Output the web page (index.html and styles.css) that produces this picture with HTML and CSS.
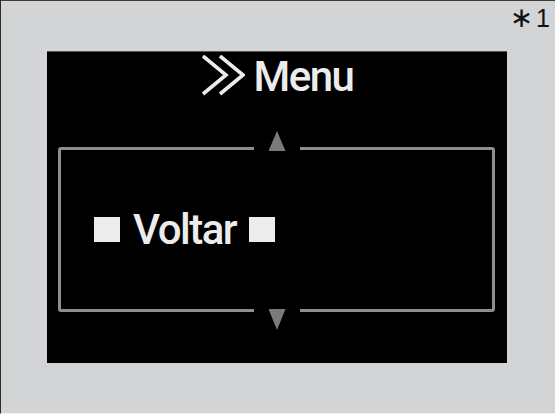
FILE: index.html
```html
<!DOCTYPE html>
<html>
<head>
<meta charset="utf-8">
<link rel="stylesheet" href="styles.css">
</head>
<body>
<div class="page">
  <div class="header"><span class="note"><span class="ast">∗</span><span class="num">1</span></span></div>
  <div class="panel">
    <div class="title">
      <svg class="chev" width="44" height="41" viewBox="0 0 44 41">
        <polyline points="2,1 25,20 2,39" fill="none" stroke="#ececec" stroke-width="3.6"/>
        <polyline points="19,1 42,20 19,39" fill="none" stroke="#ececec" stroke-width="3.6"/>
      </svg>
      <span class="title-text">Menu</span>
    </div>
    <div class="frame">
      <div class="notch notch-top"><span class="tri tri-up"></span></div>
      <div class="item">
        <span class="sq"></span>
        <span class="item-text">Voltar</span>
        <span class="sq"></span>
      </div>
      <div class="notch notch-bottom"><span class="tri tri-down"></span></div>
    </div>
  </div>
</div>
</body>
</html>
```
FILE: styles.css
```css
html, body {
  margin: 0;
  padding: 0;
  background: #d3d4d6;
}
.page {
  width: 555px;
  height: 414px;
  box-sizing: border-box;
  background: #d3d4d6;
  border-left: 1px solid #2a2a2a;
  border-top: 1px solid #3a3a3a;
  border-bottom: 1px solid #f2f2f2;
}
.header {
  height: 50px;
  display: flex;
  justify-content: flex-end;
  align-items: flex-start;
  padding-right: 5px;
  box-sizing: border-box;
}
.note {
  display: block;
  height: 30px;
  line-height: 30px;
  margin-top: 2px;
  font-family: "Liberation Sans", sans-serif;
  font-size: 25px;
  color: #111;
  white-space: nowrap;
}
.ast {
  font-family: "DejaVu Sans", sans-serif;
  font-size: 28px;
  margin-right: 3px;
}
.num {
  font-size: 25px;
}
.panel {
  margin-left: 46px;
  width: 460px;
  height: 312px;
  background: #000;
  border-top: 1px solid #555;
  box-sizing: border-box;
  display: flex;
  flex-direction: column;
}
.title {
  height: 95px;
  display: flex;
  justify-content: center;
  align-items: flex-start;
  gap: 9px;
  padding-top: 2px;
  box-sizing: border-box;
}
.chev {
  margin-top: 1px;
  display: block;
}
.title-text, .item-text {
  font-family: Roboto, "Liberation Sans", sans-serif;
  font-size: 42px;
  font-weight: 500;
  line-height: 42px;
  color: #ececec;
  letter-spacing: -1.5px;
}
.title-text {
  margin-top: 2px;
}
.frame {
  margin: 0 12px 0 11px;
  height: 165px;
  border: 3px solid #8e8e8e;
  border-radius: 3px;
  box-sizing: border-box;
  position: relative;
  display: flex;
  align-items: center;
  padding-left: 33px;
}
.item {
  display: flex;
  align-items: center;
  gap: 13px;
}
.sq {
  width: 26px;
  height: 25px;
  background: #ececec;
  display: block;
}
.notch {
  position: absolute;
  left: 193px;
  width: 46px;
  background: #000;
  display: flex;
  justify-content: center;
}
.notch-top {
  top: -19px;
  height: 20px;
  align-items: flex-start;
}
.notch-bottom {
  bottom: -21px;
  height: 21px;
  align-items: flex-end;
}
.tri {
  display: block;
  width: 17px;
  height: 20px;
  background: #7a7a7a;
}
.tri-up {
  clip-path: polygon(50% 0, 100% 100%, 0 100%);
}
.tri-down {
  height: 21px;
  clip-path: polygon(0 0, 100% 0, 50% 100%);
}
```
